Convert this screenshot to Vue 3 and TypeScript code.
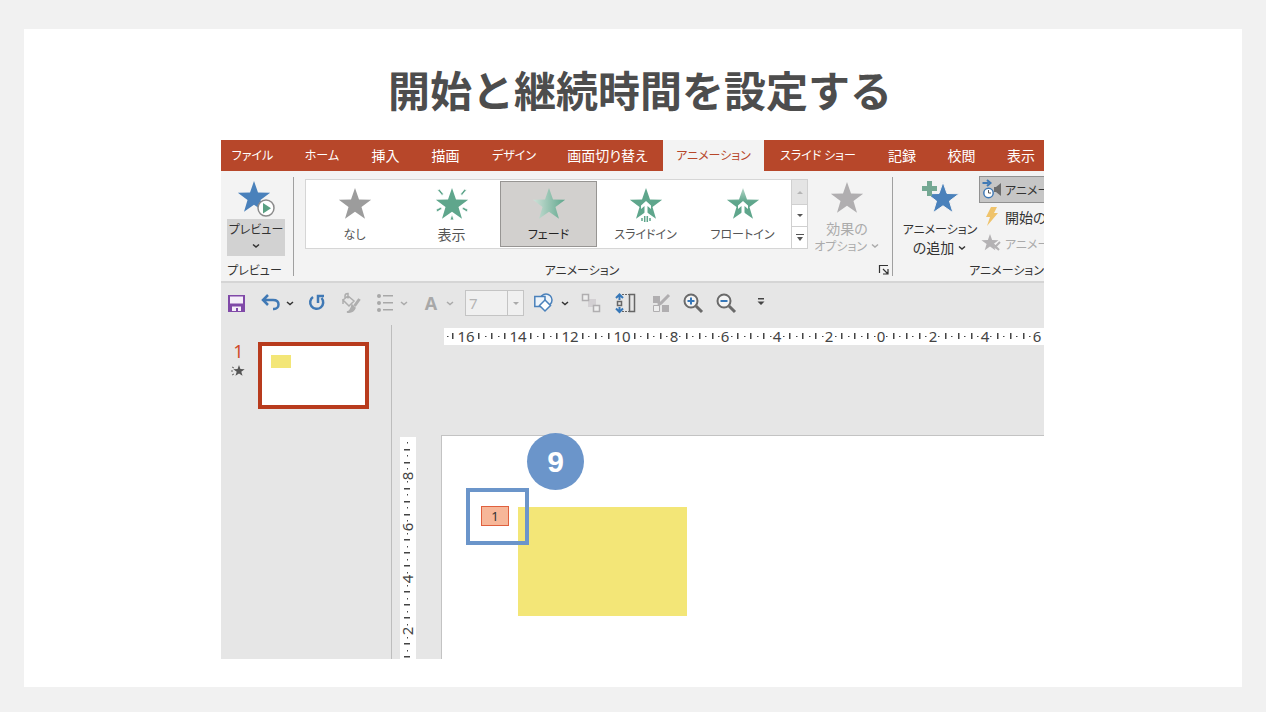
<script setup lang="ts">
interface Tab { label: string; kanji?: boolean; active?: boolean }
interface Effect { id: string; label: string; selected?: boolean; kanji?: boolean }
interface Mark { pos: number; kind: 'dot' | 'tick' | 'num'; text: string }

const tabs: Tab[] = [
  { label: 'ファイル' }, { label: 'ホーム' }, { label: '挿入', kanji: true }, { label: '描画', kanji: true },
  { label: 'デザイン' }, { label: '画面切り替え', kanji: true }, { label: 'アニメーション', active: true },
  { label: 'スライド ショー' }, { label: '記録', kanji: true }, { label: '校閲', kanji: true }, { label: '表示', kanji: true },
]

const effects: Effect[] = [
  { id: 'none', label: 'なし' },
  { id: 'appear', label: '表示', kanji: true },
  { id: 'fade', label: 'フェード', selected: true },
  { id: 'fly', label: 'スライドイン' },
  { id: 'float', label: 'フロートイン' },
]

function star(cx: number, cy: number, r: number): string {
  return Array.from({ length: 10 }, (_, i) => {
    const a = (Math.PI / 5) * i - Math.PI / 2
    const d = i % 2 ? r * 0.4 : r
    return `${(cx + d * Math.cos(a)).toFixed(2)},${(cy + d * Math.sin(a)).toFixed(2)}`
  }).join(' ')
}

/* Eight subdivisions for every two centimetres, numbered at each even one. */
function ruler(zero: number, from: number, to: number): Mark[] {
  const step = 6.48
  const out: Mark[] = []
  for (let k = from; k <= to; k++) {
    const major = k % 8 === 0
    const near = Math.abs(Math.round(k / 8) * 2)
    if (!major && near >= 10 && Math.abs(k - Math.round(k / 8) * 8) === 1) continue
    out.push({
      pos: Math.round(zero + k * step),
      kind: major ? 'num' : k % 2 ? 'dot' : 'tick',
      text: major ? String(Math.abs(k / 4)) : '',
    })
  }
  return out
}

const across = ruler(437, -66, 24).concat([{ pos: 4, kind: 'dot', text: '' }])
const down = ruler(246, -37, -4)
</script>

<template>
  <main class="card">
    <h1>開始と継続時間を設定する</h1>

    <section class="app">
      <nav class="tabs">
        <button v-for="t in tabs" :key="t.label" type="button" :class="{ active: t.active, kanji: t.kanji }">{{ t.label }}</button>
      </nav>

      <div class="ribbon">
        <div class="group preview-group">
          <button type="button" class="preview">
            <svg width="44" height="39" viewBox="0 0 44 39">
              <polygon :points="star(20, 18, 17)" fill="#4a81bb" />
              <circle cx="32" cy="28" r="8" fill="#fff" stroke="#8b8b8b" stroke-width="1.5" />
              <path d="M29 23v10.500l8-5.250z" fill="#5aa083" />
            </svg>
            <span class="preview-text">プレビュー
              <svg width="10" height="6" viewBox="0 0 10 6"><path d="M2 1.500l3 2.500 3-2.500" class="chev" /></svg>
            </span>
          </button>
          <div class="group-label">プレビュー</div>
        </div>

        <div class="group anim-group">
          <div class="anim-body">
            <div class="gallery">
              <button v-for="e in effects" :key="e.id" type="button" class="effect" :class="{ selected: e.selected, kanji: e.kanji }">
                <svg width="40" height="40" viewBox="0 0 40 40">
                  <defs>
                    <linearGradient id="fadeFill"><stop offset="0" stop-color="#d0e2d9" /><stop offset="1" stop-color="#5fa68c" /></linearGradient>
                    <linearGradient id="floatFill" x2="0" y2="1"><stop offset="0" stop-color="#b5d6c8" /><stop offset=".45" stop-color="#5fa68c" /></linearGradient>
                  </defs>
                  <polygon v-if="e.id === 'none'" :points="star(20, 20, 17)" fill="#9c9c9c" />
                  <g v-else-if="e.id === 'appear'">
                    <polygon :points="star(20, 20, 17)" fill="#5fa68c" />
                    <path d="M5.500 5l2-1 4 5-1.500 1.500zM34.500 5l-2-1-4 5 1.500 1.500zM4 24.500l5-2.500 1 2-5 3zM36 24.500l-5-2.500-1 2 5 3zM20 29l2 6h-4z" fill="#5fa68c" stroke="#fff" stroke-width=".8" />
                  </g>
                  <polygon v-else-if="e.id === 'fade'" :points="star(20, 20, 17)" fill="url(#fadeFill)" />
                  <g v-else-if="e.id === 'fly'">
                    <polygon :points="star(20, 20, 17)" fill="#5fa68c" />
                    <path d="M18.500 28V21l-3.500 3v-3.500l5-4.500 5 4.500v3.500l-3.500-3v7l3 3v6h-9v-6z" fill="#fff" />
                    <path d="M16 33v3M18.700 31v6M21.300 31v6M24 33v3" stroke="#5fa68c" stroke-width="1.500" />
                  </g>
                  <g v-else>
                    <polygon :points="star(20, 20, 17)" fill="url(#floatFill)" />
                    <path d="M18.500 31V21l-3.500 3v-3.500l5-4.500 5 4.500v3.500l-3.500-3v10z" fill="#fff" />
                  </g>
                </svg>
                <span>{{ e.label }}</span>
              </button>
            </div>
            <div class="scroller">
              <button type="button" class="off" aria-label="前の行"><svg width="8" height="5" viewBox="0 0 8 5"><path d="M1 4l3-3 3 3z" fill="#b5b5b5" /></svg></button>
              <button type="button" aria-label="次の行"><svg width="8" height="5" viewBox="0 0 8 5"><path d="M1 1l3 3 3-3z" fill="#555" /></svg></button>
              <button type="button" aria-label="その他"><svg width="8" height="9" viewBox="0 0 8 9"><path d="M0 1.500h8" stroke="#555" /><path d="M1 4l3 4 3-4z" fill="#555" /></svg></button>
            </div>
            <button type="button" class="options" disabled>
              <svg width="40" height="40" viewBox="0 0 40 40"><polygon :points="star(20, 20, 17)" fill="#b0aeb0" /></svg>
              <span class="kanji">効果の</span>
              <span>オプション <svg width="10" height="6" viewBox="0 0 10 6"><path d="M2 1.500l3 2.500 3-2.500" class="chev pale" /></svg></span>
            </button>
          </div>
          <div class="group-label">アニメーション
            <button type="button" class="launcher" aria-label="詳細">
              <svg width="12" height="12" viewBox="0 0 12 12" fill="none" stroke="#333" stroke-width="1.200"><path d="M1.500 9V1.500H10M5 5l4.500 4.500M10 5v5H5" /></svg>
            </button>
          </div>
        </div>

        <div class="group adv-group">
          <div class="adv-body">
            <button type="button" class="add">
              <svg width="44" height="40" viewBox="0 0 44 40">
                <polygon :points="star(25, 19, 17)" fill="#4a81bb" stroke="#f3f3f3" />
                <path d="M9 1h5v5h5v5h-5v5H9v-5H4V6h5z" fill="#74a893" />
              </svg>
              <span>アニメーション</span>
              <span class="kanji">の追加 <svg width="10" height="6" viewBox="0 0 10 6"><path d="M2 1.500l3 2.500 3-2.500" class="chev" /></svg></span>
            </button>
            <div class="side">
              <button type="button" class="pressed">
                <svg width="22" height="22" viewBox="0 0 22 22" fill="none">
                  <circle cx="7.500" cy="14" r="4.700" fill="#fff" stroke="#3f79b5" stroke-width="1.500" />
                  <path d="M7.500 11v3h2.500" stroke="#555" />
                  <path d="M1.500 4h6M6 1l3.500 3L6 7" stroke="#3f79b5" stroke-width="2" />
                  <path d="M13 8h2l5-4v13l-5-4h-2z" fill="#6d6d6d" />
                </svg>アニメー
              </button>
              <button type="button" class="kanji">
                <svg width="22" height="22" viewBox="0 0 22 22"><path d="M10 1h6l-3 6h4L6 20l3-9H5z" fill="#efc36b" /></svg>開始の
              </button>
              <button type="button" disabled>
                <svg width="22" height="22" viewBox="0 0 22 22">
                  <polygon :points="star(9, 10, 9)" fill="#b4b2b4" />
                  <path d="M11 10l7 7M19 9l-5 5 3 2" stroke="#b4b2b4" stroke-width="2" fill="none" />
                </svg>アニメー
              </button>
            </div>
          </div>
          <div class="group-label">アニメーション</div>
        </div>
      </div>

      <div class="toolbar">
        <button type="button" aria-label="保存">
          <svg width="24" height="24" viewBox="0 0 24 24"><path d="M3 4h17v17H3z" fill="#8049a8" /><path d="M5 5.500h13v7H5zM7 15.500h9V20h-3v-3h-2v3H7z" fill="#f5eef9" /></svg>
        </button>
        <button type="button" aria-label="元に戻す">
          <svg width="24" height="24" viewBox="0 0 24 24" fill="none" stroke="#4079b5" stroke-width="2.500"><path d="M9 4L4 9l5 5M4.500 9H14c4 0 5.500 2 5.500 4.500S17.500 18 15 18h-1" /></svg>
          <svg class="arrow" width="10" height="10" viewBox="0 0 10 10"><path d="M2 4l3 2.500L8 4" class="chev" /></svg>
        </button>
        <button type="button" aria-label="やり直し">
          <svg width="24" height="24" viewBox="0 0 24 24" fill="none" stroke="#4079b5" stroke-width="2.500"><path d="M8 6A6.500 6.500 0 1 0 16.500 7M13 12V5h6" /></svg>
        </button>
        <button type="button" aria-label="塗りつぶし" disabled>
          <svg width="24" height="24" viewBox="0 0 24 24" fill="none" stroke="#aeaeae" stroke-width="1.500"><path d="M4 9l5-4 6 5-5 5zM6 8V5q0-2.500 3-2.500v5M4 8v5" /><path d="M20.500 8l-5 7" stroke-width="3" /><path d="M13 14l3 3q-2 5-8 4 4-1 5-7z" fill="#aeaeae" /></svg>
        </button>
        <button type="button" aria-label="箇条書き" disabled>
          <svg width="24" height="24" viewBox="0 0 24 24" fill="#a8a8a8"><circle cx="6" cy="5" r="2" /><circle cx="6" cy="12" r="2" /><circle cx="6" cy="19" r="2" /><path d="M10 4h10v1.500H10zM10 11h10v1.500H10zM10 18h10v1.500H10z" /></svg>
          <svg class="arrow" width="10" height="10" viewBox="0 0 10 10"><path d="M2 4l3 2.500L8 4" class="chev pale" /></svg>
        </button>
        <button type="button" class="letter" aria-label="フォントの色" disabled>
          <span>A</span>
          <svg class="arrow" width="10" height="10" viewBox="0 0 10 10"><path d="M2 4l3 2.500L8 4" class="chev pale" /></svg>
        </button>
        <label class="size">
          <select aria-label="フォント サイズ" disabled><option>7</option></select>
          <span class="drop"><svg width="8" height="5" viewBox="0 0 8 5"><path d="M1 1l3 3 3-3z" fill="#aaa" /></svg></span>
        </label>
        <button type="button" aria-label="図形">
          <svg width="24" height="24" viewBox="0 0 24 24" fill="#eef4fa" stroke="#4a81bb" stroke-width="1.500"><circle cx="12" cy="9" r="6" /><path d="M.8 5.500H11v10H.8z" /><path d="M11 9l5.500 5.500L11 20l-5.500-5.500z" fill="#fff" /></svg>
          <svg class="arrow" width="10" height="10" viewBox="0 0 10 10"><path d="M2 4l3 2.500L8 4" class="chev" /></svg>
        </button>
        <button type="button" aria-label="グループ化" disabled>
          <svg width="24" height="24" viewBox="0 0 24 24"><path d="M8 8h8v8H8z" fill="#d3d0d3" /><path d="M2.500 3.500h6v6h-6zM13.500 14.500h6v6h-6z" fill="#eee" stroke="#b0aeb0" stroke-width="1.500" /></svg>
        </button>
        <button type="button" aria-label="上下に整列">
          <svg width="24" height="24" viewBox="0 0 24 24" fill="none" stroke="#666"><path d="M8 3.500h8M8 20.500h8" stroke-dasharray="2 1" /><path d="M15.500 3.500h5v17h-5z" stroke-width="1.500" /><path d="M3.500 10.500h4v4h-4z" stroke-width="1.500" /><path d="M5.500 9V4M5.500 16v5M2 7l3.500-3.500L9 7M2 17.500L5.500 21 9 17.500" stroke="#3677b8" stroke-width="2" /></svg>
        </button>
        <button type="button" aria-label="図形の編集" disabled>
          <svg width="24" height="24" viewBox="0 0 24 24"><path d="M5 5h7v7H5zM14 14h7v7h-7z" fill="#b0aeb0" /><path d="M5.500 14.500h6v6h-6z" fill="#eee" stroke="#b0aeb0" /><path d="M21 4l-8 8-3 2" stroke="#b0aeb0" stroke-width="3" fill="none" /></svg>
        </button>
        <button type="button" aria-label="拡大">
          <svg width="24" height="24" viewBox="0 0 24 24" fill="none"><circle cx="9" cy="10" r="6.500" fill="#f4f4f4" stroke="#6a6a6a" stroke-width="2" /><path d="M14 15l6 6" stroke="#6a6a6a" stroke-width="3" /><path d="M9 6.500v7M5.500 10h7" stroke="#3677b8" stroke-width="2" /></svg>
        </button>
        <button type="button" aria-label="縮小">
          <svg width="24" height="24" viewBox="0 0 24 24" fill="none"><circle cx="8" cy="10" r="6.500" fill="#f4f4f4" stroke="#6a6a6a" stroke-width="2" /><path d="M13 15l6 6" stroke="#6a6a6a" stroke-width="3" /><path d="M4.500 10h7" stroke="#3677b8" stroke-width="2" /></svg>
        </button>
        <button type="button" aria-label="カスタマイズ">
          <svg width="24" height="24" viewBox="0 0 24 24"><path d="M8 7h6v1.500H8zM7.500 10.500h7L11 14z" fill="#444" /></svg>
        </button>
      </div>

      <div class="work">
        <aside class="thumbs">
          <div class="thumb-info">
            <span>1</span>
            <svg width="14" height="14" viewBox="0 0 14 14"><polygon :points="star(8, 7, 6)" fill="#555" /><path d="M1 3l2 1M0 7h2M1 11l2-1" stroke="#666" /></svg>
          </div>
          <button type="button" class="thumb" aria-label="スライド 1"><span class="thumb-shape"></span></button>
        </aside>

        <div class="editor">
          <svg class="ruler-h" height="17">
            <g v-for="(m, i) in across" :key="i">
              <text v-if="m.kind === 'num'" :x="m.pos" y="14" text-anchor="middle">{{ m.text }}</text>
              <rect v-else-if="m.kind === 'tick'" :x="m.pos - 1" y="5" width="1.500" height="6" />
              <rect v-else :x="m.pos - 1" y="8" width="1.500" height="1" />
            </g>
          </svg>
          <svg class="ruler-v" width="16">
            <g v-for="(m, i) in down" :key="i">
              <text v-if="m.kind === 'num'" :transform="`translate(13 ${m.pos}) rotate(-90)`" text-anchor="middle">{{ m.text }}</text>
              <rect v-else-if="m.kind === 'tick'" x="4" :y="m.pos - 1" width="6" height="1.500" />
              <rect v-else x="7" :y="m.pos - 1" width="1" height="1.500" />
            </g>
          </svg>
          <div class="slide">
            <div class="shape"></div>
            <div class="tag">1</div>
            <div class="frame"></div>
            <div class="step">9</div>
          </div>
        </div>
      </div>
    </section>
  </main>
</template>

<style>
body { background: #f1f1f1; }
</style>

<style scoped>
* { box-sizing: border-box; }
.card {
  margin: 29px 24px 25px;
  min-height: calc(100vh - 54px);
  background: #fff;
  overflow: hidden;
  font-family: "Noto Sans CJK JP", sans-serif;
  color: #333;
}
h1 {
  margin: 30px 0 21px;
  padding-left: 14px;
  text-align: center;
  font-size: 42px;
  line-height: 60px;
  font-weight: 700;
  color: #4d4d4d;
}
button {
  font: inherit;
  color: inherit;
  border: 0;
  background: none;
  padding: 0;
  margin: 0;
  white-space: nowrap;
}
svg { display: block; flex: none; }
.app {
  margin: 0 198px 0 197px;
  overflow: hidden;
  background: #e6e6e6;
  font-size: 12px;
  line-height: 18px;
  font-feature-settings: "palt";
}
button.kanji, span.kanji { font-size: 14px; }
.chev { fill: none; stroke: #333; stroke-width: 1.5; }
.chev.pale { stroke: #aaa; }

.tabs {
  display: grid;
  grid-template-columns: 67px 68px 59px 61px 76px 111px 101px 108px 60px 59px 1fr;
  height: 32px;
  background: linear-gradient(#b7472a 31px, #f3f3f3 31px);
  color: #fff;
}
.tabs button { padding-bottom: 3px; }
.tabs button:first-child { padding-right: 4px; }
.tabs button:last-child { padding-left: 16px; text-align: left; }
.tabs .active { background: #f3f3f3; color: #b7472a; }

.ribbon {
  display: flex;
  height: 111px;
  background: #f3f3f3;
  border-bottom: 2px solid #d5d5d5;
}
.group { display: flex; flex-direction: column; flex: none; margin: 5px 0; }
.preview-group, .anim-group { border-right: 1px solid #a0a0a0; }
.group-label {
  position: relative;
  margin-top: auto;
  text-align: center;
  line-height: 12px;
}
.preview-group { width: 73px; }
.preview-group .group-label { padding-right: 5px; }
.preview { width: 58px; margin-left: 6px; }
.preview > svg { margin: 3px auto 0 7px; }
.preview-text { display: block; height: 37px; padding-top: 1px; background: #d2d2d2; }
.preview-text svg { margin: 5px auto 0; }

.anim-group { width: 599px; }
.anim-group .group-label { padding-right: 22px; }
.anim-body { display: flex; padding: 2px 0 0 11px; }
.gallery { display: flex; height: 70px; padding: 1px 0; background: #fff; border: 1px solid #d6d6d6; border-right: 0; }
.effect { width: 97px; height: 66px; border: 1px solid transparent; color: #555; }
.effect svg { margin: 0 auto; }
.effect span { display: block; }
.effect.selected { background: #d2d0ce; border-color: #979593; color: #222; }
.scroller { display: grid; grid-template-rows: 25px 22px 1fr; width: 17px; border: 1px solid #d0d0d0; height: 70px; }
.scroller button { display: grid; place-items: center; background: #fff; border-bottom: 1px solid #d0d0d0; }
.scroller button:last-child { border-bottom: 0; }
.scroller .off { background: #e4e4e4; }
.options { width: 78px; color: #ababab; }
.options svg, .add svg { margin: 0 auto; }
.options span, .add span { display: block; }
.options span svg, .add span svg { display: inline; vertical-align: 2px; }
.launcher { position: absolute; right: 2px; top: 0; }

.adv-body { display: flex; }
.adv-group { flex: 1; min-width: 0; }
.adv-group .group-label { text-align: right; }
.add { flex: none; width: 86px; padding-left: 8px; padding-top: 2px; }
.side { flex: 1; min-width: 0; margin-top: -1px; }
.side button { display: flex; align-items: center; gap: 2px; width: 100%; height: 27px; padding-left: 2px; color: #333; }
.side .pressed { background: #c6c6c6; border: 1px solid #919191; border-right: 0; padding-left: 1px; }
.side button:disabled { color: #aaa; }

.toolbar { display: flex; align-items: center; gap: 10px; height: 40px; padding-left: 4px; }
.toolbar button { display: flex; flex: none; align-items: center; gap: 2px; height: 24px; }
.letter span { width: 24px; font-size: 18px; font-weight: 700; color: #a8a8a8; font-family: "Open Sans", sans-serif; }
.size { display: flex; width: 59px; height: 26px; border: 1px solid #c4c4c4; background: #f0f0f0; }
.size select {
  appearance: none;
  flex: 1;
  min-width: 0;
  border: 0;
  padding: 0 3px;
  background: none;
  font: 15px "Noto Sans", sans-serif;
  color: #b5b5b5;
  opacity: 1;
}
.drop { display: grid; place-items: center; width: 16px; border-left: 1px solid #c4c4c4; }

.work { display: flex; height: 336px; }
.thumbs { display: flex; flex: none; gap: 12px; width: 171px; margin-top: 2px; padding: 17px 0 0 10px; border-right: 1px solid #bdbdbd; }
.thumb-info { width: 15px; text-align: center; color: #d04a2b; font: 18px/18px "Noto Sans", sans-serif; }
.thumb-info svg { margin-top: 4px; }
.thumb { width: 111px; height: 67px; border: 4px solid #b83b1d; background: #fff; padding: 9px; }
.thumb-shape { display: block; width: 20px; height: 13px; margin-bottom: 28px; background: #f3e677; }
.editor {
  flex: 1;
  min-width: 0;
  display: grid;
  grid-template-columns: 49px minmax(0, 1fr);
  grid-template-rows: 112px 1fr;
}
.ruler-h, .ruler-v { background: #fff; fill: #444; font: 15px "Noto Sans", sans-serif; }
.ruler-h { grid-column: 2; width: calc(100% - 3px); margin: 5px 0 0 3px; }
.ruler-v { grid-column: 1; grid-row: 2; height: calc(100% - 2px); margin: 2px 0 0 8px; }
.slide { position: relative; grid-column: 2; grid-row: 2; background: #fff; border: 1px solid #c3c3c3; border-width: 1px 0 0 1px; }
.shape { position: absolute; left: 76px; top: 71px; width: 169px; height: 109px; background: #f3e677; }
.tag { position: absolute; left: 39px; top: 70px; width: 28px; height: 20px; border: 1px solid #e0603e; background: #f7b799; text-align: center; font: 13px/18px "Noto Sans", sans-serif; }
.frame { position: absolute; left: 24px; top: 52px; width: 63px; height: 57px; border: 4px solid #6b95ca; }
.step { position: absolute; left: 85px; top: -3px; width: 57px; height: 57px; border-radius: 50%; background: #6b95ca; color: #fff; text-align: center; font: 700 30px/57px "Liberation Sans", sans-serif; }
</style>
